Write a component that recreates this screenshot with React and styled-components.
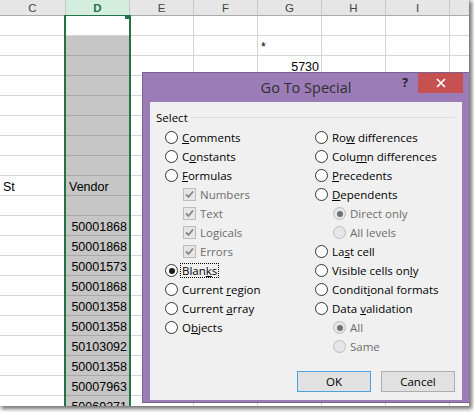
import React from "react";
import styled, { createGlobalStyle } from "styled-components";

const GlobalStyle = createGlobalStyle`
  html, body { margin: 0; padding: 0; background: #ffffff; }
  #root { width: 474px; height: 412px; }
`;

const Frame = styled.div`
  position: relative;
  width: 469px;
  height: 406px;
  overflow: hidden;
  background: #fff;
  box-shadow: 2px 2px 4px 1px rgba(0, 0, 0, 0.55);
`;

const Sheet = styled.div`
  display: grid;
  grid-template-columns: 66px repeat(7, 64px);
  grid-template-rows: 16px;
  grid-auto-rows: 20px;
  font-family: "Liberation Sans", Arial, sans-serif;
  font-size: 12.5px;
  color: #000;
`;

const ColHead = styled.div`
  box-sizing: border-box;
  display: flex;
  align-items: center;
  justify-content: center;
  background: ${(p) => (p.$sel ? "#d3eedf" : "#e6e6e6")};
  color: ${(p) => (p.$sel ? "#217346" : "#444")};
  font-weight: ${(p) => (p.$sel ? 700 : 400)};
  font-size: 11.5px;
  border-right: 1px solid #c8c8c8;
  border-bottom: 1px solid ${(p) => (p.$sel ? "#217346" : "#ababab")};
`;

const Cell = styled.div`
  box-sizing: border-box;
  display: flex;
  align-items: flex-end;
  justify-content: ${(p) => (p.$right ? "flex-end" : "flex-start")};
  padding: 0 2px 0 3px;
  background: ${(p) => (p.$shade ? "#c6c6c6" : "#fff")};
  border-right: 1px solid ${(p) => (p.$shade ? "#a8a8a8" : "#d6d6d6")};
  border-bottom: 1px solid ${(p) => (p.$shade ? "#a8a8a8" : "#d6d6d6")};
  line-height: 16px;
  white-space: nowrap;
  overflow: hidden;
`;

const Selection = styled.div`
  position: absolute;
  left: 64px;
  top: 15px;
  bottom: 0;
  width: 67px;
  box-sizing: border-box;
  border-left: 2px solid #217346;
  border-right: 2px solid #217346;
  pointer-events: none;
`;

const Handle = styled.div`
  position: absolute;
  right: -1px;
  top: 0;
  width: 5px;
  height: 4px;
  background: #217346;
`;

const Dialog = styled.div`
  position: absolute;
  left: 142px;
  top: 72px;
  width: 328px;
  height: 331px;
  box-sizing: border-box;
  background: #9b7cb6;
  border: 1px solid #7a6291;
  display: flex;
  flex-direction: column;
  padding: 0 7px 2px 7px;
  font-family: "Segoe UI", "Open Sans", sans-serif;
`;

const TitleBar = styled.div`
  height: 29px;
  margin: 0 -7px;
  display: grid;
  grid-template-columns: 1fr auto 1fr;
  align-items: start;
`;

const Title = styled.div`
  grid-column: 2;
  line-height: 29px;
  font-size: 14.5px;
  color: #2e2e2e;
  white-space: nowrap;
`;

const Controls = styled.div`
  grid-column: 3;
  justify-self: end;
  display: flex;
  align-items: flex-start;
  gap: 10px;
  padding-right: 6px;
`;

const Help = styled.div`
  line-height: 20px;
  font-size: 12px;
  font-weight: 700;
  color: #222;
`;

const Close = styled.div`
  width: 45px;
  height: 20px;
  background: #c75050;
  display: flex;
  align-items: center;
  justify-content: center;
`;

const Body = styled.div`
  flex: 1;
  background: #f0f0f0;
  display: flex;
  flex-direction: column;
  padding: 7px 7px 8px 6px;
  font-size: 11.5px;
  color: #000;
`;

const GroupHeader = styled.div`
  display: flex;
  align-items: center;
  height: 16px;
`;

const GroupLine = styled.div`
  flex: 1;
  height: 1px;
  margin-left: 3px;
  background: #dcdcdc;
`;

const Columns = styled.div`
  display: grid;
  grid-template-columns: 150px 150px;
  margin-top: 3px;
`;

const Column = styled.div`
  display: flex;
  flex-direction: column;
  padding-left: 9px;
`;

const Item = styled.div`
  height: 19px;
  display: flex;
  align-items: center;
  margin-left: ${(p) => (p.$sub ? "18px" : "0")};
`;

const RadioCircle = styled.span`
  box-sizing: border-box;
  width: 13px;
  height: 13px;
  flex: none;
  border-radius: 50%;
  border: 1px solid ${(p) => (p.$disabled ? "#bcbcbc" : "#333")};
  background: ${(p) => (p.$disabled ? "#e6e6e6" : "#fff")};
  display: flex;
  align-items: center;
  justify-content: center;
  &::after {
    content: "";
    display: ${(p) => (p.$checked ? "block" : "none")};
    width: 6px;
    height: 6px;
    border-radius: 50%;
    background: ${(p) => (p.$disabled ? "#707070" : "#1a1a1a")};
  }
`;

const CheckBox = styled.span`
  box-sizing: border-box;
  width: 13px;
  height: 13px;
  flex: none;
  border: 1px solid #bcbcbc;
  background: #e6e6e6;
  display: flex;
  align-items: center;
  justify-content: center;
`;

const Label = styled.span`
  margin-left: 2px;
  padding: 0 1px;
  border: 1px dotted ${(p) => (p.$focus ? "#000" : "transparent")};
  color: ${(p) => (p.$disabled ? "#6d6d6d" : "#000")};
  line-height: 13px;
  white-space: nowrap;
  & u {
    text-underline-offset: 1px;
  }
`;

const ButtonRow = styled.div`
  margin-top: auto;
  display: flex;
  justify-content: flex-end;
  gap: 10px;
`;

const Button = styled.div`
  box-sizing: border-box;
  width: 74px;
  height: 21px;
  border: 1px solid ${(p) => (p.$default ? "#4aa3df" : "#adadad")};
  background: #e1e1e1;
  display: flex;
  align-items: center;
  justify-content: center;
  color: #000;
`;

const columns = ["C", "D", "E", "F", "G", "H", "I", ""];

const vendorNums = [
  "50001868",
  "50001868",
  "50001573",
  "50001868",
  "50001358",
  "50001358",
  "50103092",
  "50001358",
  "50007963",
  "50069271",
];

function buildRows() {
  const rows = [];
  for (let r = 1; r <= 20; r++) {
    const cells = Array(8).fill(null).map(() => ({ text: "", right: false }));
    if (r === 2) cells[4] = { text: "*", right: false };
    if (r === 3) cells[4] = { text: "5730", right: true };
    if (r === 9) {
      cells[0] = { text: "St", right: false };
      cells[1] = { text: "Vendor", right: false };
    }
    if (r >= 11) cells[1] = { text: vendorNums[r - 11], right: true };
    rows.push(cells);
  }
  return rows;
}

const rows = buildRows();

function Acc({ text, at }) {
  if (at == null) return text;
  return (
    <>
      {text.slice(0, at)}
      <u>{text[at]}</u>
      {text.slice(at + 1)}
    </>
  );
}

function Radio({ text, at, checked, disabled, sub, focus }) {
  return (
    <Item $sub={sub}>
      <RadioCircle $checked={checked} $disabled={disabled} />
      <Label $disabled={disabled} $focus={focus}>
        <Acc text={text} at={at} />
      </Label>
    </Item>
  );
}

function Check({ text }) {
  return (
    <Item $sub>
      <CheckBox>
        <svg width="11" height="11" viewBox="0 0 11 11">
          <polyline
            points="2,5.5 4.5,8 9,2.5"
            fill="none"
            stroke="#858585"
            strokeWidth="1.8"
          />
        </svg>
      </CheckBox>
      <Label $disabled>{text}</Label>
    </Item>
  );
}

export default function App() {
  return (
    <>
      <GlobalStyle />
      <Frame>
        <Sheet>
          {columns.map((c, i) => (
            <ColHead key={"h" + i} $sel={i === 1}>
              {c}
            </ColHead>
          ))}
          {rows.map((cells, r) =>
            cells.map((cell, i) => (
              <Cell
                key={r + "-" + i}
                $shade={i === 1 && r >= 1}
                $right={cell.right}
              >
                {cell.text}
              </Cell>
            ))
          )}
        </Sheet>
        <Selection>
          <Handle />
        </Selection>
        <Dialog>
          <TitleBar>
            <Title>Go To Special</Title>
            <Controls>
              <Help>?</Help>
              <Close>
                <svg width="10" height="10" viewBox="0 0 10 10">
                  <path
                    d="M1 1 L9 9 M9 1 L1 9"
                    stroke="#fff"
                    strokeWidth="1.7"
                    fill="none"
                  />
                </svg>
              </Close>
            </Controls>
          </TitleBar>
          <Body>
            <GroupHeader>
              <span>Select</span>
              <GroupLine />
            </GroupHeader>
            <Columns>
              <Column>
                <Radio text="Comments" at={0} />
                <Radio text="Constants" at={1} />
                <Radio text="Formulas" at={0} />
                <Check text="Numbers" />
                <Check text="Text" />
                <Check text="Logicals" />
                <Check text="Errors" />
                <Radio text="Blanks" at={4} checked focus />
                <Radio text="Current region" at={8} />
                <Radio text="Current array" at={8} />
                <Radio text="Objects" at={1} />
              </Column>
              <Column>
                <Radio text="Row differences" at={2} />
                <Radio text="Column differences" at={4} />
                <Radio text="Precedents" at={0} />
                <Radio text="Dependents" at={0} />
                <Radio text="Direct only" sub disabled checked />
                <Radio text="All levels" sub disabled />
                <Radio text="Last cell" at={2} />
                <Radio text="Visible cells only" at={16} />
                <Radio text="Conditional formats" at={6} />
                <Radio text="Data validation" at={5} />
                <Radio text="All" sub disabled checked />
                <Radio text="Same" sub disabled />
              </Column>
            </Columns>
            <ButtonRow>
              <Button $default>OK</Button>
              <Button>Cancel</Button>
            </ButtonRow>
          </Body>
        </Dialog>
      </Frame>
    </>
  );
}
